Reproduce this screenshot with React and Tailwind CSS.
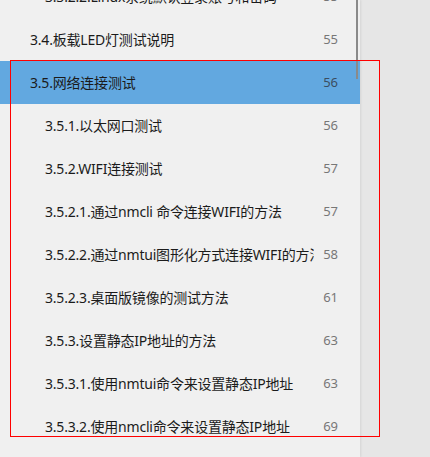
import React from "react";

const items = [
  { level: 3, title: "3.3.2.2.Linux系统默认登录账号和密码", page: "55" },
  { level: 2, title: "3.4.板载LED灯测试说明", page: "55" },
  { level: 2, title: "3.5.网络连接测试", page: "56", active: true },
  { level: 3, title: "3.5.1.以太网口测试", page: "56" },
  { level: 3, title: "3.5.2.WIFI连接测试", page: "57" },
  { level: 3, title: "3.5.2.1.通过nmcli 命令连接WIFI的方法", page: "57" },
  { level: 3, title: "3.5.2.2.通过nmtui图形化方式连接WIFI的方法", page: "58" },
  { level: 3, title: "3.5.2.3.桌面版镜像的测试方法", page: "61" },
  { level: 3, title: "3.5.3.设置静态IP地址的方法", page: "63" },
  { level: 3, title: "3.5.3.1.使用nmtui命令来设置静态IP地址", page: "63" },
  { level: 3, title: "3.5.3.2.使用nmcli命令来设置静态IP地址", page: "69" },
  { level: 3, title: "3.5.3.3.设置开发板的静态IP地址", page: "72" },
];

const App = () => {
  return (
    <div
      className="relative flex w-[430px] h-[457px] overflow-hidden bg-[#e6e6e6]"
      style={{ fontFamily: '"Noto Sans", "Noto Sans CJK SC", sans-serif' }}
    >
      <div className="relative w-[360px] h-full bg-[#f0f0f0] shadow-[1px_0_2px_rgba(0,0,0,0.08)]">
        <ul className="-mt-[25px]">
          {items.map((item) => (
            <li
              key={item.title}
              className={`flex items-center h-[43px] pr-[22px] ${
                item.active ? "bg-[#62a8e0]" : ""
              } ${item.level === 2 ? "pl-[30px]" : "pl-[45px]"}`}
            >
              <span className="flex-1 min-w-0 overflow-hidden whitespace-nowrap text-[14px] text-[#1b1b1b] tracking-[-0.2px]">
                {item.title}
              </span>
              <span
                className={`w-[23px] ml-[1px] text-right text-[13px] ${
                  item.active ? "text-[#3b4d60]" : "text-[#777]"
                }`}
              >
                {item.page}
              </span>
            </li>
          ))}
        </ul>
        {/* scrollbar */}
        <div className="absolute top-0 right-[2px] w-[2px] h-[79px] bg-[#8a8a8a]"></div>
      </div>

      {/* selection box */}
      <div className="absolute left-[10px] top-[60px] w-[370px] h-[377px] border border-[#ff0000]"></div>
    </div>
  );
};

export default App;
